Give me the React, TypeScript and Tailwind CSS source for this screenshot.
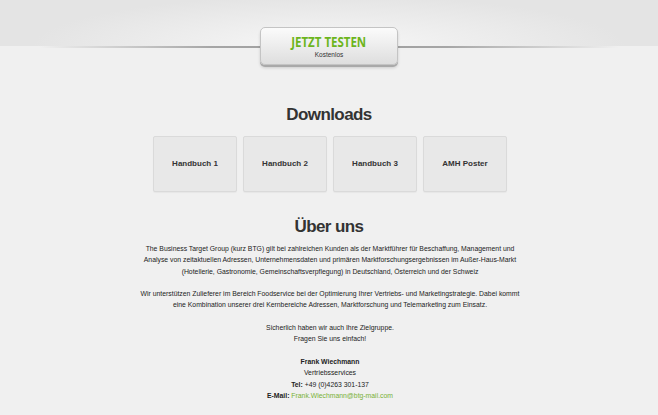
const downloads = ["Handbuch 1", "Handbuch 2", "Handbuch 3", "AMH Poster"];

export default function App() {
  return (
    <div className="min-h-[415px] bg-[#f0f0f0] font-['Liberation_Sans',Arial,sans-serif] text-[#222]">
      <header className="relative h-[68px]">
        <div className="h-[46px] bg-[radial-gradient(ellipse_45%_110%_at_50%_100%,#f7f7f7_0%,#e4e4e4_100%)]" />
        <div className="h-[2px] bg-[linear-gradient(to_right,transparent_6%,#a6a6a6_32%,#9c9c9c_50%,#a6a6a6_68%,transparent_94%)]" />
        <a
          href="#"
          className="absolute left-1/2 top-[27px] flex h-[38px] w-[138px] -translate-x-1/2 flex-col items-center rounded-[5px] border border-[#c4c4c4] bg-[linear-gradient(to_bottom,#fbfbfb,#dedede)] shadow-[0_2px_0_#a9a9a9,0_3px_3px_rgba(0,0,0,0.15)]"
        >
          <span className="mt-[4px] inline-block scale-x-[0.82] font-['Open_Sans',sans-serif] text-[14px] leading-[19px] font-bold text-[#6cb51c]">
            JETZT TESTEN
          </span>
          <span className="text-[6.5px] leading-[8px] text-[#333]">Kostenlos</span>
        </a>
      </header>

      <section className="mt-[36px] flex flex-col items-center">
        <h2 className="text-[17px] leading-[22px] font-bold tracking-[-0.6px] text-[#333]">Downloads</h2>
        <div className="mt-[10px] ml-[2px] flex gap-[6px]">
          {downloads.map((d) => (
            <a
              key={d}
              href="#"
              className="flex h-[56px] w-[84px] items-center justify-center rounded-[2px] border border-[#dadada] bg-[#e8e8e8] text-[8px] font-bold text-[#333] shadow-[0_1px_1px_rgba(0,0,0,0.04)]"
            >
              {d}
            </a>
          ))}
        </div>
      </section>

      <section className="mt-[24px] flex flex-col items-center text-center">
        <h2 className="text-[17px] leading-[22px] font-bold tracking-[-0.6px] text-[#333]">Über uns</h2>
        <div className="mt-[5px] ml-[2px] text-[6.85px] leading-[11.3px]">
          <p>
            The Business Target Group (kurz BTG) gilt bei zahlreichen Kunden als der Marktführer für Beschaffung, Management und
            <br />
            Analyse von zeitaktuellen Adressen, Unternehmensdaten und primären Marktforschungsergebnissen im Außer-Haus-Markt
            <br />
            (Hotellerie, Gastronomie, Gemeinschaftsverpflegung) in Deutschland, Österreich und der Schweiz
          </p>
          <p className="mt-[11.3px]">
            Wir unterstützen Zulieferer im Bereich Foodservice bei der Optimierung Ihrer Vertriebs- und Marketingstrategie. Dabei kommt
            <br />
            eine Kombination unserer drei Kernbereiche Adressen, Marktforschung und Telemarketing zum Einsatz.
          </p>
          <p className="mt-[11.3px]">
            Sicherlich haben wir auch Ihre Zielgruppe.
            <br />
            Fragen Sie uns einfach!
          </p>
          <p className="mt-[11.3px]">
            <strong>Frank Wiechmann</strong>
            <br />
            Vertriebsservices
            <br />
            <strong>Tel:</strong> +49 (0)4263 301-137
            <br />
            <strong>E-Mail:</strong>{" "}
            <a href="#" className="text-[#78b135]">
              Frank.Wiechmann@btg-mail.com
            </a>
          </p>
        </div>
      </section>
    </div>
  );
}
